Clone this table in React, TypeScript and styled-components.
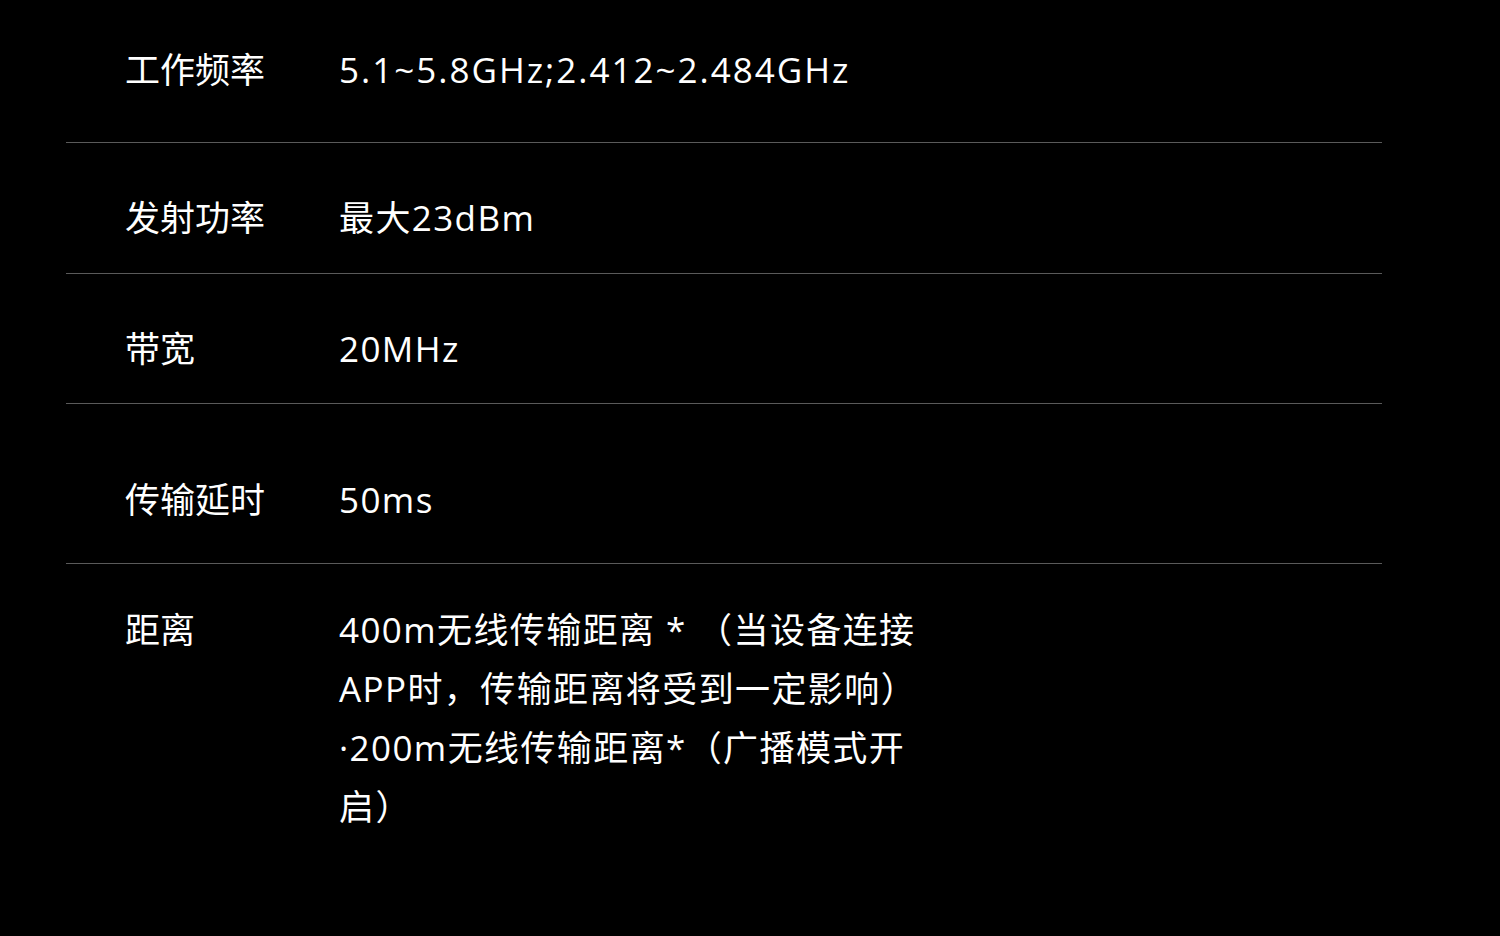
import styled, { createGlobalStyle } from 'styled-components';

const GlobalStyle = createGlobalStyle`
    html, body {
        margin: 0;
        padding: 0;
        background: #000;
    }
    body {
        font-family: "Open Sans", "Noto Sans CJK SC", sans-serif;
        color: #fff;
    }
`;

const Page = styled.div`
    width: 1500px;
    height: 936px;
    background: #000;
    padding: 0 118px 0 66px;
    box-sizing: border-box;
`;

const SpecList = styled.div`
    display: flex;
    flex-direction: column;
`;

const SpecRow = styled.div<{ $top: number; $bottom: number; $last?: boolean }>`
    display: grid;
    grid-template-columns: 214px 590px;
    padding: ${p => p.$top}px 0 ${p => p.$bottom}px 59px;
    border-bottom: ${p => (p.$last ? 'none' : '1px solid #5a5a5a')};
`;

const Label = styled.div`
    font-size: 35px;
    line-height: 59px;
    white-space: nowrap;
`;

const Value = styled.div<{ $spacing: number }>`
    font-size: 35px;
    line-height: 59px;
    letter-spacing: ${p => p.$spacing}px;
`;

type Spec = { label: string; value: string; top: number; bottom: number; spacing: number };

const specs: Spec[] = [
    { label: '工作频率', value: '5.1~5.8GHz;2.412~2.484GHz', top: 40, bottom: 43, spacing: 2 },
    { label: '发射功率', value: '最大23dBm', top: 45, bottom: 26, spacing: 1.4 },
    { label: '带宽', value: '20MHz', top: 45, bottom: 25, spacing: 1.4 },
    { label: '传输延时', value: '50ms', top: 66, bottom: 34, spacing: 1.4 },
    { label: '距离', value: '400m无线传输距离 * （当设备连接APP时，传输距离将受到一定影响）·200m无线传输距离*（广播模式开启）', top: 36, bottom: 0, spacing: 1.4 },
];

function App() {
    return (
        <>
            <GlobalStyle />
            <Page>
                <SpecList>
                    {specs.map((s, i) => (
                        <SpecRow key={s.label} $top={s.top} $bottom={s.bottom} $last={i === specs.length - 1}>
                            <Label>{s.label}</Label>
                            <Value $spacing={s.spacing}>{s.value}</Value>
                        </SpecRow>
                    ))}
                </SpecList>
            </Page>
        </>
    );
}

export default App;
